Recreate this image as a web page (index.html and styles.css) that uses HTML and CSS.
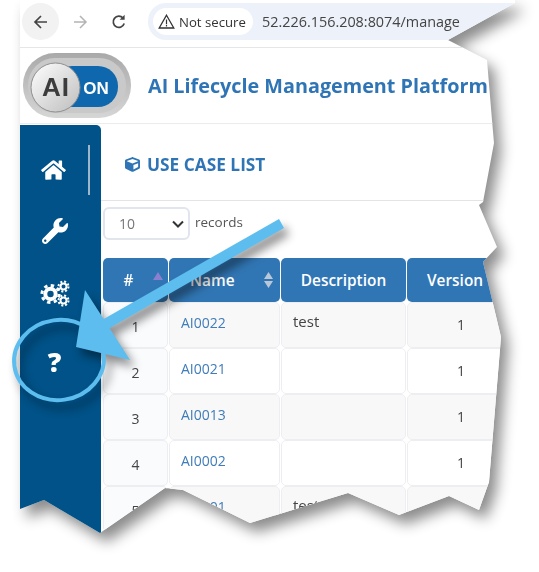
FILE: index.html
```html
<!DOCTYPE html>
<html lang="en">
<head>
    <meta charset="UTF-8">
    <title>AI Lifecycle Management Platform</title>
    <link rel="stylesheet" href="styles.css">
</head>
<body>
    <div class="torn">
        <div class="shot">
            <div class="toolbar">
                <div class="nav-btn back">
                    <svg width="18" height="18" viewBox="0 0 18 18"><path d="M15 9H3.5M9 3 3 9l6 6" fill="none" stroke="#444" stroke-width="1.7"/></svg>
                </div>
                <div class="nav-btn">
                    <svg width="18" height="18" viewBox="0 0 18 18"><path d="M3 9h11.5M9 3l6 6-6 6" fill="none" stroke="#b4b4b4" stroke-width="1.5"/></svg>
                </div>
                <div class="nav-btn">
                    <svg width="18" height="18" viewBox="0 0 18 18"><path d="M14.2 10.5A5.6 5.6 0 1 1 13 5" fill="none" stroke="#444" stroke-width="1.7"/><path d="M14.6 1.8v5h-5z" fill="#444"/></svg>
                </div>
                <div class="address">
                    <div class="chip">
                        <svg width="17" height="15" viewBox="0 0 17 15"><path d="M8.5 1.2 15.8 14H1.2z" fill="none" stroke="#333" stroke-width="1.3"/><path d="M8.5 5.5v4.4M8.5 10.8v1.6" stroke="#333" stroke-width="1.2"/></svg>
                        Not secure
                    </div>
                    <span class="url">52.226.156.208:8074/manage</span>
                </div>
            </div>

            <header class="app-header">
                <svg class="logo" width="110" height="68" viewBox="0 0 110 68">
                    <defs>
                        <linearGradient id="knob" x1="0" y1="0" x2="1" y2="1">
                            <stop offset="0" stop-color="#ffffff"/>
                            <stop offset="1" stop-color="#bdbdbd"/>
                        </linearGradient>
                        <linearGradient id="pill" x1="0" y1="0" x2="0" y2="1">
                            <stop offset="0" stop-color="#a9a9a9"/>
                            <stop offset="1" stop-color="#d6d6d6"/>
                        </linearGradient>
                    </defs>
                    <rect x="1" y="1" width="108" height="65" rx="32" fill="url(#pill)"/>
                    <rect x="6" y="6" width="98" height="55" rx="27" fill="#c9c9c9"/>
                    <rect x="30" y="14" width="66" height="41" rx="20" fill="#0f67ad"/>
                    <circle cx="33.5" cy="35.5" r="24.5" fill="url(#knob)" stroke="#8f8f8f" stroke-width="1"/>
                    <text x="34" y="43.500" class="logo-ai" text-anchor="middle">AI</text>
                    <text x="74" y="42" class="logo-on" text-anchor="middle">ON</text>
                </svg>
                <h1>AI Lifecycle Management Platform</h1>
            </header>

            <div class="app-body">
                <nav class="sidebar">
                    <a class="side-item home-item">
                        <svg width="25" height="22" viewBox="0 0 576 512"><path fill="#fff" d="M280.37 148.26L96 300.11V464a16 16 0 0 0 16 16l112.06-.29a16 16 0 0 0 15.92-16V368a16 16 0 0 1 16-16h64a16 16 0 0 1 16 16v95.64a16 16 0 0 0 16 16.05L464 480a16 16 0 0 0 16-16V300L295.67 148.26a12.19 12.19 0 0 0-15.3 0zM571.6 251.47L488 182.56V44.05a12 12 0 0 0-12-12h-56a12 12 0 0 0-12 12v72.61L318.47 43a48 48 0 0 0-61 0L4.34 251.47a12 12 0 0 0-1.6 16.9l25.5 31A12 12 0 0 0 45.15 301l235.22-193.74a12.19 12.19 0 0 1 15.3 0L530.9 301a12 12 0 0 0 16.9-1.6l25.5-31a12 12 0 0 0-1.7-16.93z"/></svg>
                    </a>
                    <a class="side-item">
                        <svg width="26" height="26" viewBox="0 0 512 512"><path fill="#fff" d="M507.73 109.1c-2.24-9.03-13.54-12.09-20.12-5.51l-74.36 74.36-67.88-11.31-11.31-67.88 74.36-74.36c6.62-6.62 3.43-17.9-5.66-20.16-47.38-11.74-99.55.91-136.58 37.93-39.64 39.64-50.55 97.1-34.05 147.2L18.74 402.76c-24.99 24.99-24.99 65.51 0 90.5 24.99 24.99 65.51 24.99 90.5 0l213.21-213.21c50.12 16.71 107.47 5.68 147.37-34.22 37.07-37.07 49.7-89.32 37.91-136.73zM64 472c-13.25 0-24-10.75-24-24 0-13.26 10.75-24 24-24s24 10.74 24 24c0 13.25-10.75 24-24 24z"/></svg>
                    </a>
                    <a class="side-item">
                        <svg width="30" height="27" viewBox="0 0 30 27" fill="none" stroke="#fff">
                            <circle cx="10.5" cy="14" r="5.2" stroke-width="4"/>
                            <circle cx="10.5" cy="14" r="8.6" stroke-width="3" stroke-dasharray="3.4 3.35"/>
                            <circle cx="23.5" cy="6.5" r="3" stroke-width="2"/>
                            <circle cx="23.5" cy="6.5" r="5" stroke-width="2" stroke-dasharray="2 1.93"/>
                            <circle cx="23.5" cy="20.5" r="3" stroke-width="2"/>
                            <circle cx="23.5" cy="20.5" r="5" stroke-width="2" stroke-dasharray="2 1.93"/>
                        </svg>
                    </a>
                    <a class="side-item help-item">?</a>
                </nav>

                <main class="content">
                    <div class="page-title">
                        <svg width="15" height="15" viewBox="0 0 512 512"><path fill="#2f75b5" d="M239.1 6.3l-208 78c-18.7 7-31.1 25-31.1 45v225.1c0 18.2 10.3 34.8 26.5 42.9l208 104c13.5 6.8 29.4 6.8 42.9 0l208-104c16.3-8.1 26.5-24.8 26.5-42.9V129.3c0-20-12.4-37.9-31.1-44.9l-208-78C262 2.2 250 2.2 239.1 6.3zM256 68.4l192 72v1.1l-192 78-192-78v-1.1l192-72zm32 356V275.5l160-65v133.9l-160 80z"/></svg>
                        <h2>USE CASE LIST</h2>
                    </div>

                    <div class="length-row">
                        <div class="select-box">
                            <span>10</span>
                            <svg width="12" height="8" viewBox="0 0 12 8"><path d="M1 1.5 6 6.5l5-5" fill="none" stroke="#333" stroke-width="2"/></svg>
                        </div>
                        <span class="records">records</span>
                    </div>

                    <table class="cases">
                        <colgroup>
                            <col class="c-num"><col class="c-name"><col class="c-desc"><col class="c-ver">
                        </colgroup>
                        <thead>
                            <tr>
                                <th class="num-head">#<svg class="sort" width="10" height="8" viewBox="0 0 10 8"><path d="M5 0l5 8H0z" fill="#8d7fd0"/></svg></th>
                                <th class="name-head">Name<svg class="sort sort-both" width="9" height="16" viewBox="0 0 9 16"><path d="M4.5 0 9 7H0zM4.5 16 0 9h9z" fill="#b9c8d8"/></svg></th>
                                <th>Description</th>
                                <th class="ver-head">Version</th>
                            </tr>
                        </thead>
                        <tbody>
                            <tr><td class="num">1</td><td><a>AI0022</a></td><td class="desc">test</td><td class="ver">1</td></tr>
                            <tr><td class="num">2</td><td><a>AI0021</a></td><td></td><td class="ver">1</td></tr>
                            <tr><td class="num">3</td><td><a>AI0013</a></td><td></td><td class="ver">1</td></tr>
                            <tr><td class="num">4</td><td><a>AI0002</a></td><td></td><td class="ver">1</td></tr>
                            <tr><td class="num">5</td><td><a>AI0001</a></td><td class="desc">test</td><td class="ver">1</td></tr>
                        </tbody>
                    </table>
                </main>
            </div>
        </div>
    </div>

    <!-- callout drawn on top of the screenshot -->
    <svg class="callout" width="539" height="572" viewBox="0 0 539 572">
        <g fill="#5cbdee">
            <ellipse cx="59" cy="360" rx="45" ry="40" fill="none" stroke="#5cbdee" stroke-width="4" transform="rotate(-8 59 360)"/>
            <path d="M279 219 284 228 108 329 102 320z"/>
            <path d="M85 290 76 347 130 360z"/>
        </g>
    </svg>
</body>
</html>
```

FILE: styles.css
```css
* {
    margin: 0;
    padding: 0;
    box-sizing: border-box;
}

body {
    width: 539px;
    height: 572px;
    overflow: hidden;
    position: relative;
    background-color: #ffffff;
    font-family: 'Open Sans', sans-serif;
    color: #444;
}

.torn {
    margin-left: 20px;
    width: 500px;
    filter: drop-shadow(7px 9px 7px rgba(0, 0, 0, 0.45));
}

.shot {
    width: 500px;
    height: 540px;
    overflow: hidden;
    background-color: #ffffff;
    clip-path: polygon(0 0, 495px 0, 495px 3px, 428px 40px, 467px 60px, 472px 120px, 474px 143px, 463px 202px, 459px 205px, 477px 247px, 463px 262px, 481px 337px, 469px 482px, 459px 510px, 429px 496px, 379px 515px, 328px 493px, 230px 523px, 163px 490px, 145px 488px, 80px 533px, 24px 500px, 0 509px);
}

/* browser bar */
.toolbar {
    height: 48px;
    padding-top: 3px;
    display: flex;
    align-items: flex-start;
    border-bottom: 1px solid #e6e6e6;
}

.nav-btn {
    width: 37px;
    height: 37px;
    margin-right: 2px;
    border-radius: 50%;
    display: flex;
    align-items: center;
    justify-content: center;
    flex-shrink: 0;
}

.nav-btn.back {
    background-color: #f2f2f2;
    margin-left: 2px;
}

.address {
    margin-left: 9px;
    width: 400px;
    height: 37px;
    flex-shrink: 0;
    border-radius: 18px 0 0 18px;
    background-color: #edf2fa;
    display: flex;
    align-items: center;
    padding-left: 5px;
}

.chip {
    width: 100px;
    height: 27px;
    border-radius: 14px;
    background-color: #ffffff;
    display: flex;
    align-items: center;
    gap: 4px;
    padding-left: 5px;
    font-size: 13.2px;
    color: #333;
    white-space: nowrap;
}

.url {
    margin-left: 9px;
    font-size: 14.4px;
    color: #444;
}

/* app header */
.app-header {
    height: 76px;
    display: flex;
    align-items: center;
    border-bottom: 1px solid #ececec;
}

.logo {
    margin-left: 2px;
    flex-shrink: 0;
}

.logo-ai {
    font-family: 'Liberation Sans', sans-serif;
    font-size: 26px;
    font-weight: bold;
    letter-spacing: 1px;
    fill: #3c3c3c;
}

.logo-on {
    font-family: 'Liberation Sans', sans-serif;
    font-size: 17px;
    font-weight: bold;
    fill: #ffffff;
}

.app-header h1 {
    margin-left: 16px;
    font-size: 19.8px;
    font-weight: 700;
    color: #2f75b5;
    white-space: nowrap;
}

.app-body {
    display: flex;
    margin-top: 1px;
}

/* side menu */
.sidebar {
    width: 81px;
    height: 420px;
    flex-shrink: 0;
    background-color: #005288;
    border-top-right-radius: 5px;
    padding-top: 13px;
    display: flex;
    flex-direction: column;
}

.side-item {
    height: 62px;
    width: 70px;
    display: flex;
    align-items: center;
    justify-content: center;
    padding-right: 1px;
}

.home-item {
    border-right: 2px solid #9db6c9;
    height: 50px;
    margin-top: 7px;
    margin-bottom: 5px;
}

.help-item {
    margin-top: 6px;
    color: #ffffff;
    font-size: 27px;
    font-weight: 800;
}

/* main content */
.content {
    flex-grow: 1;
    min-width: 0;
}

.page-title {
    height: 76px;
    padding: 3px 0 0 24px;
    display: flex;
    align-items: center;
    gap: 7px;
    border-bottom: 1px solid #e2e4e8;
}

.page-title h2 {
    font-size: 17.3px;
    font-weight: 700;
    color: #2f75b5;
    white-space: nowrap;
}

.length-row {
    display: flex;
    align-items: flex-start;
    padding: 6px 0 0 2px;
    height: 57px;
}

.select-box {
    width: 87px;
    height: 33px;
    border: 2px solid #e1e5ee;
    border-radius: 6px;
    display: flex;
    align-items: center;
    justify-content: space-between;
    padding: 0 4px 0 14px;
    font-size: 14px;
    color: #777;
}

.records {
    margin-left: 5px;
    margin-top: 6px;
    font-size: 13.5px;
    color: #555;
}

/* table */
.cases {
    table-layout: fixed;
    width: 411px;
    margin-left: 1px;
    border-collapse: separate;
    border-spacing: 1px 0;
    font-size: 14px;
}

.c-num { width: 65px; }
.c-name { width: 111px; }
.c-desc { width: 125px; }
.c-ver { width: 108px; }

.cases th {
    position: relative;
    height: 44px;
    background-color: #3176b4;
    color: #ffffff;
    font-size: 15.4px;
    font-weight: 600;
    border-radius: 5px;
    text-align: center;
}

.cases th.num-head {
    padding-right: 14px;
}

.cases th.name-head {
    text-align: left;
    padding-left: 21px;
}

.cases th.ver-head {
    text-align: left;
    padding-left: 20px;
}

.sort {
    position: absolute;
    top: 14px;
    right: 5px;
}

.sort-both {
    right: 7px;
    top: 14px;
}

.cases td {
    height: 46px;
    border: 1px solid #edeef1;
    border-radius: 5px;
    padding: 0 0 6px 11px;
    background-color: #ffffff;
    color: #444;
}

.cases tbody tr:nth-child(odd) td {
    background-color: #f8f8f8;
}

.cases td.num,
.cases tbody tr:nth-child(odd) td.num {
    background-color: #fafbfd;
    text-align: center;
    padding: 2px 0 0;
}

.cases td.ver {
    text-align: center;
    padding: 0 0 2px;
}

.cases td.desc {
    font-size: 15px;
    padding-bottom: 8px;
}

.cases a {
    color: #3f7cb8;
}

/* annotation */
.callout {
    position: absolute;
    left: 0;
    top: 0;
    filter: drop-shadow(5px 7px 5px rgba(0, 0, 0, 0.45));
}
```
